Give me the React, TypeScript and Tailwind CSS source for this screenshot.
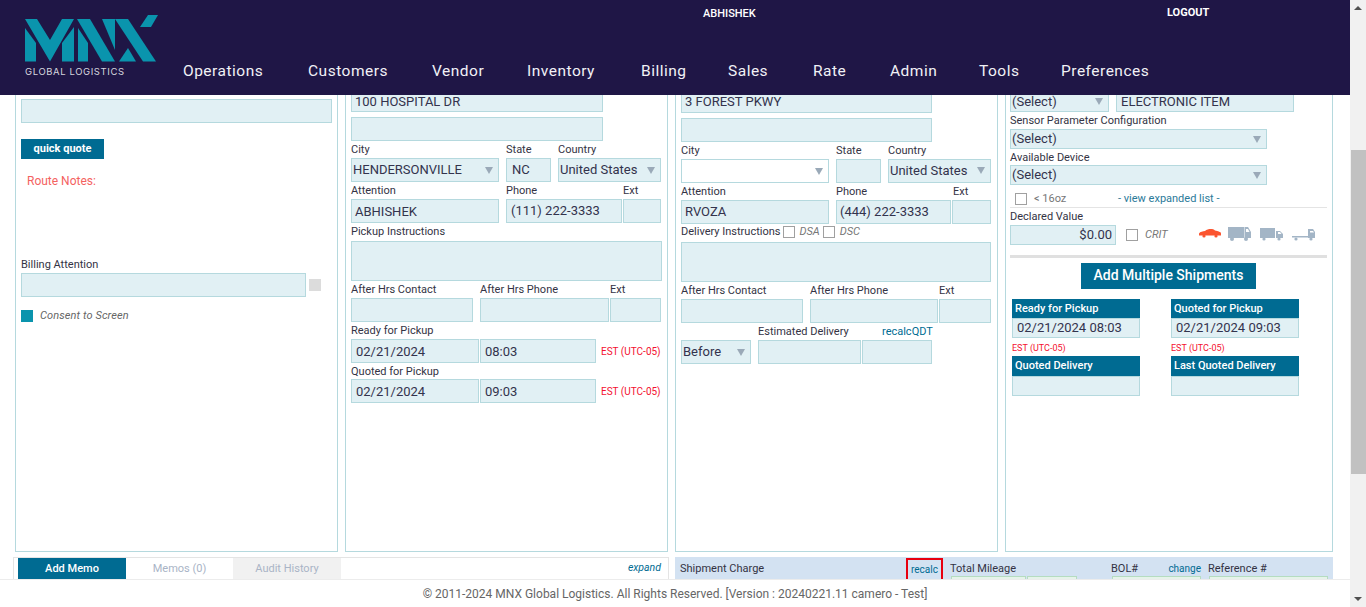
import type { ReactNode } from 'react'

const NAV = [
    { label: 'Operations', width: 'w-[81px]' },
    { label: 'Customers', width: 'w-[80px]' },
    { label: 'Vendor', width: 'w-[51px]' },
    { label: 'Inventory', width: 'w-[70px]' },
    { label: 'Billing', width: 'w-[43px]' },
    { label: 'Sales', width: 'w-[41px]' },
    { label: 'Rate', width: 'w-[33px]' },
    { label: 'Admin', width: 'w-[45px]' },
    { label: 'Tools', width: 'w-[38px]' },
    { label: 'Preferences', width: 'w-[90px]' },
]

function Logo() {
    return (
        <div className="w-[183px] shrink-0 pl-[25px] pt-[15px]">
            <svg width="134" height="47" viewBox="25 15 134 47" className="block fill-[#0a94ad]">
                <polygon points="25,28 36,43 36,61.5 25,61.5" />
                <polygon points="25,19 37,19 50,40 62,19 74,19 50,61.5" />
                <polygon points="62,43 74,27 74,61.5 62,61.5" />
                <polygon points="78,28 88,43 88,61.5 78,61.5" />
                <polygon points="77,19 90,19 115,61.5 102,61.5" />
                <polygon points="102,19 115,19 115,50" />
                <polygon points="115,19 128,19 156,61.5 143,61.5" />
                <polygon points="119,61.5 128,48 136,61.5" />
                <polygon points="140,27 148,15 158,15 151,27" />
            </svg>
            <div className="mt-[3px] font-['Inter',sans-serif] text-[9.5px] leading-[14px] tracking-[0.6px] text-[#d5d5de]">GLOBAL LOGISTICS</div>
        </div>
    )
}

function Header() {
    return (
        <header className="flex h-[95px] shrink-0 bg-[#1f1646] text-white">
            <Logo />
            <div className="flex flex-1 flex-col justify-between pb-[13px] pt-[6px]">
                <div className="flex text-[11px] leading-[14px]">
                    <span className="ml-[520px] w-[464px] pt-px font-medium">ABHISHEK</span>
                    <span className="font-bold">LOGOUT</span>
                </div>
                <nav className="flex gap-[44px] text-[15.5px] leading-[22px] tracking-[0.5px] text-[#f1f1f6]">
                    {NAV.map(n => (
                        <span key={n.label} className={`whitespace-nowrap ${n.width}`}>
                            {n.label}
                        </span>
                    ))}
                </nav>
            </div>
        </header>
    )
}

function Field({ className = '', children }: { className?: string; children?: ReactNode }) {
    return (
        <div className={`flex shrink-0 items-center overflow-hidden whitespace-nowrap border border-[#b5d9de] bg-[#e1f0f4] px-[3px] text-[13px] leading-[14px] text-[#33334d] ${className}`}>
            {children}
        </div>
    )
}

function Select({ className = '', children }: { className?: string; children?: ReactNode }) {
    return (
        <Field className={`justify-between pl-[1px] pr-[5px] ${className}`}>
            <span>{children}</span>
            <span className="h-0 w-0 border-x-[4px] border-t-[7px] border-x-transparent border-t-[#9aa9b8]" />
        </Field>
    )
}

function Label({ className = '', children }: { className?: string; children?: ReactNode }) {
    return <span className={`shrink-0 whitespace-nowrap text-[11px] text-[#333344] ${className}`}>{children}</span>
}

function LabelRow({ className = 'h-[17px]', children }: { className?: string; children?: ReactNode }) {
    return <div className={`flex shrink-0 items-center pt-[2px] ${className}`}>{children}</div>
}

function Check({ className = '' }: { className?: string }) {
    return <span className={`inline-block h-[12px] w-[12px] shrink-0 border border-[#a0a0a0] bg-white ${className}`} />
}

function Est({ className = '' }: { className?: string }) {
    return <span className={`whitespace-nowrap leading-[12px] text-[#f4102f] ${className}`}>EST (UTC-05)</span>
}

function BillingColumn() {
    return (
        <section className="flex w-[323px] shrink-0 flex-col border-x border-b border-[#b5d9de] px-[5px]">
            <Field className="mt-[4px] h-[24px] w-[311px]" />
            <button className="mt-[16px] h-[20px] w-[83px] bg-[#006b92] text-[11px] font-bold text-white">quick quote</button>
            <div className="ml-[6px] mt-[15px] text-[12px] leading-[14px] text-[#f4625f]">Route Notes:</div>
            <LabelRow className="mt-[69px] h-[14px]">
                <Label>Billing Attention</Label>
            </LabelRow>
            <div className="mt-[2px] flex items-center gap-[3px]">
                <Field className="h-[24px] w-[285px]" />
                <span className="h-[12px] w-[12px] bg-[#dcdcdc]" />
            </div>
            <div className="mt-[13px] flex items-center gap-[7px]">
                <span className="h-[12px] w-[12px] bg-[#0a94ad]" />
                <span className="text-[11px] italic leading-[12px] tracking-[0.1px] text-[#666666]">Consent to Screen</span>
            </div>
        </section>
    )
}

function PickupColumn() {
    return (
        <section className="flex w-[323px] shrink-0 flex-col border-x border-b border-[#b5d9de] px-[5px]">
            <Field className="-mt-[5px] h-[22px] w-[252px] pt-[2px]">100 HOSPITAL DR</Field>
            <Field className="mt-[5px] h-[24px] w-[252px]" />
            <LabelRow>
                <Label className="w-[155px]">City</Label>
                <Label className="w-[52px]">State</Label>
                <Label>Country</Label>
            </LabelRow>
            <div className="flex h-[24px]">
                <Select className="w-[148px]">HENDERSONVILLE</Select>
                <Field className="ml-[7px] w-[45px] justify-start pl-[5px]">NC</Field>
                <Select className="ml-[7px] w-[103px]">United States</Select>
            </div>
            <LabelRow>
                <Label className="w-[155px]">Attention</Label>
                <Label className="w-[117px]">Phone</Label>
                <Label>Ext</Label>
            </LabelRow>
            <div className="flex h-[24px]">
                <Field className="w-[148px] pt-px">ABHISHEK</Field>
                <Field className="ml-[7px] w-[116px] pl-[4px]">(111) 222-3333</Field>
                <Field className="ml-[1px] w-[38px]" />
            </div>
            <LabelRow className="h-[18px] pb-[2px]">
                <Label>Pickup Instructions</Label>
            </LabelRow>
            <Field className="h-[40px] w-[311px]" />
            <LabelRow>
                <Label className="w-[129px]">After Hrs Contact</Label>
                <Label className="w-[130px]">After Hrs Phone</Label>
                <Label>Ext</Label>
            </LabelRow>
            <div className="flex h-[24px]">
                <Field className="w-[122px]" />
                <Field className="ml-[7px] w-[129px]" />
                <Field className="ml-[1px] w-[51px]" />
            </div>
            <LabelRow>
                <Label>Ready for Pickup</Label>
            </LabelRow>
            <div className="flex h-[24px] items-center">
                <Field className="h-full w-[128px] pl-[4px] pt-px">02/21/2024</Field>
                <Field className="ml-[1px] h-full w-[116px] pl-[4px] pt-px">08:03</Field>
                <Est className="ml-[5px] mt-px text-[10px]" />
            </div>
            <LabelRow className="h-[16px]">
                <Label>Quoted for Pickup</Label>
            </LabelRow>
            <div className="flex h-[24px] items-center">
                <Field className="h-full w-[128px] pl-[4px] pt-px">02/21/2024</Field>
                <Field className="ml-[1px] h-full w-[116px] pl-[4px] pt-px">09:03</Field>
                <Est className="ml-[5px] mt-px text-[10px]" />
            </div>
        </section>
    )
}

function DeliveryColumn() {
    return (
        <section className="flex w-[323px] shrink-0 flex-col border-x border-b border-[#b5d9de] px-[5px]">
            <Field className="-mt-[4px] h-[22px] w-[251px]">3 FOREST PKWY</Field>
            <Field className="mt-[5px] h-[24px] w-[251px]" />
            <LabelRow>
                <Label className="w-[155px]">City</Label>
                <Label className="w-[52px]">State</Label>
                <Label>Country</Label>
            </LabelRow>
            <div className="flex h-[24px]">
                <Select className="w-[148px] bg-white" />
                <Field className="ml-[7px] w-[45px]" />
                <Select className="ml-[7px] w-[103px] pb-px">United States</Select>
            </div>
            <LabelRow>
                <Label className="w-[155px]">Attention</Label>
                <Label className="w-[117px]">Phone</Label>
                <Label>Ext</Label>
            </LabelRow>
            <div className="flex h-[24px]">
                <Field className="w-[148px]">RVOZA</Field>
                <Field className="ml-[7px] w-[115px]">(444) 222-3333</Field>
                <Field className="ml-[1px] w-[39px]" />
            </div>
            <div className="flex h-[18px] shrink-0 items-center pb-[2px]">
                <Label>Delivery Instructions</Label>
                <Check className="ml-[3px]" />
                <span className="ml-[4px] text-[11px] italic text-[#777777]">DSA</span>
                <Check className="ml-[3px]" />
                <span className="ml-[5px] text-[11px] italic text-[#777777]">DSC</span>
            </div>
            <Field className="h-[40px] w-[310px]" />
            <LabelRow>
                <Label className="w-[129px]">After Hrs Contact</Label>
                <Label className="w-[129px]">After Hrs Phone</Label>
                <Label>Ext</Label>
            </LabelRow>
            <div className="flex h-[24px]">
                <Field className="w-[122px]" />
                <Field className="ml-[7px] w-[128px]" />
                <Field className="ml-[1px] w-[52px]" />
            </div>
            <LabelRow>
                <Label className="ml-[77px] w-[124px]">Estimated Delivery</Label>
                <span className="text-[11px] text-[#006b92]">recalcQDT</span>
            </LabelRow>
            <div className="flex h-[24px]">
                <Select className="w-[70px]">Before</Select>
                <Field className="ml-[7px] w-[103px]" />
                <Field className="ml-[1px] w-[70px]" />
            </div>
        </section>
    )
}

function Vehicles() {
    return (
        <svg width="118" height="16" viewBox="0 0 118 16" className="ml-[53px] block">
            <g fill="#fb5530" transform="translate(0 -2.5)">
                <path d="M0 9 C1 7 4 7 6 6.5 C9 4 14 4 16 6 C19 7 22 7 22 9 L22 11 L0 11 Z" />
                <circle cx="5" cy="11.5" r="1.6" />
                <circle cx="17" cy="11.5" r="1.6" />
            </g>
            <g fill="#a3b5c6" transform="translate(0 -1)">
                <path d="M29 1 H45 V12 H29 Z" />
                <path d="M45.5 1 H49 L52 6 V12 H45.5 Z" />
                <circle cx="33" cy="13" r="2" />
                <circle cx="47" cy="13" r="2" />
                <path d="M61 2 H76 V12 H61 Z" />
                <path d="M77 5 H81 L84 8 V12 H77 Z" />
                <circle cx="65" cy="13" r="1.6" />
                <circle cx="80" cy="13" r="1.6" />
                <path d="M93 10 H109 V11.5 H93 Z" />
                <path d="M109 3 H114 L116 6 V12 H109 Z" />
                <circle cx="97" cy="13" r="1.6" />
                <circle cx="112" cy="13" r="1.6" />
            </g>
            <g fill="#ffffff" transform="translate(0 -1)">
                <path d="M47 3 H49 L50.5 6 H47 Z" />
                <path d="M79 6 H81 L82.5 8 H79 Z" />
                <path d="M111 5 H114 L115 6.5 H111 Z" />
            </g>
        </svg>
    )
}

function TimeCard({ title, value, headClass }: { title: string; value?: string; headClass: string }) {
    return (
        <div className="w-[128px]">
            <div className={`flex items-center bg-[#006b92] px-[3px] pt-px text-[11px] font-medium text-white ${headClass}`}>{title}</div>
            <Field className="h-[20px] w-full pl-[4px]">{value}</Field>
        </div>
    )
}

function ServiceColumn() {
    return (
        <section className="flex w-[328px] shrink-0 flex-col border-x border-b border-[#b5d9de] pl-[4px]">
            <div className="-mt-[5px] flex h-[22px]">
                <Select className="w-[99px] pt-px">(Select)</Select>
                <Field className="ml-[7px] w-[178px] pl-[4px] pt-px">ELECTRONIC ITEM</Field>
            </div>
            <LabelRow>
                <Label>Sensor Parameter Configuration</Label>
            </LabelRow>
            <Select className="h-[20px] w-[257px]">(Select)</Select>
            <LabelRow className="h-[16px]">
                <Label>Available Device</Label>
            </LabelRow>
            <Select className="h-[20px] w-[257px]">(Select)</Select>
            <div className="mt-[7px] flex h-[14px] items-center pl-[5px] text-[11px]">
                <Check />
                <span className="ml-[7px] w-[84px] text-[#777777]">&lt; 16oz</span>
                <span className="text-[#2b7a99]">- view expanded list -</span>
            </div>
            <div className="mt-[1px] h-px w-[317px] bg-[#e4e4e4]" />
            <LabelRow className="h-[17px]">
                <Label>Declared Value</Label>
            </LabelRow>
            <div className="flex h-[20px] items-center">
                <Field className="h-full w-[106px] justify-end">$0.00</Field>
                <Check className="ml-[10px]" />
                <span className="ml-[7px] w-[1px] whitespace-nowrap text-[11px] italic text-[#777777]">CRIT</span>
                <Vehicles />
            </div>
            <div className="mt-[10px] h-[3px] w-[317px] bg-[#e0e0e0]" />
            <button className="ml-[71px] mt-[5px] h-[26px] w-[175px] shrink-0 bg-[#006b92] pb-px text-[14px] font-medium text-white">Add Multiple Shipments</button>
            <div className="ml-[2px] mt-[10px] flex gap-[31px]">
                <div className="w-[128px]">
                    <TimeCard title="Ready for Pickup" value="02/21/2024 08:03" headClass="h-[19px]" />
                    <Est className="mt-[4px] block text-[9px]" />
                    <div className="mt-[2px]">
                        <TimeCard title="Quoted Delivery" headClass="h-[20px]" />
                    </div>
                </div>
                <div className="w-[128px]">
                    <TimeCard title="Quoted for Pickup" value="02/21/2024 09:03" headClass="h-[19px]" />
                    <Est className="mt-[4px] block text-[9px]" />
                    <div className="mt-[2px]">
                        <TimeCard title="Last Quoted Delivery" headClass="h-[20px]" />
                    </div>
                </div>
            </div>
        </section>
    )
}

function MemoBar() {
    return (
        <div className="ml-[13px] flex h-[22px] w-[656px] items-start border-x border-t border-[#e4e4e4] pl-[4px] text-[11px] font-medium">
            <span className="flex h-[21px] w-[108px] items-center justify-center bg-[#006b92] pt-px text-white">Add Memo</span>
            <span className="flex h-[21px] w-[107px] items-center justify-center pt-px font-normal text-[#a9b4c6]">Memos (0)</span>
            <span className="flex h-[21px] w-[108px] items-center justify-center bg-[#f1f1f1] pt-px font-normal text-[#a9b4c6]">Audit History</span>
            <span className="ml-auto mr-[7px] mt-[3px] text-[10.5px] font-normal italic leading-[14px] text-[#006b92]">expand</span>
        </div>
    )
}

function ChargeBar() {
    return (
        <div className="ml-[6px] flex h-[22px] w-[658px] overflow-hidden bg-[#d3e2f2] text-[11px] text-[#333344]">
            <span className="mt-[5px] w-[231px] shrink-0 pl-[5px] leading-[14px]">Shipment Charge</span>
            <span className="mt-px flex h-[30px] w-[37px] shrink-0 justify-center border-2 border-[#e8000f] pt-[3px] text-[10px] leading-[14px] text-[#006b92]">recalc</span>
            <div className="ml-[7px] w-[161px] shrink-0">
                <div className="mt-[5px] leading-[14px]">Total Mileage</div>
                <div className="ml-px flex gap-px">
                    <span className="h-[8px] w-[75px] border border-[#b5dcc0] bg-[#e6f3ea]" />
                    <span className="h-[8px] w-[50px] border border-[#b5dcc0] bg-[#e6f3ea]" />
                </div>
            </div>
            <div className="w-[97px] shrink-0">
                <div className="mt-[5px] flex justify-between leading-[14px]">
                    <span>BOL#</span>
                    <span className="mr-[7px] text-[10px] text-[#006b92]">change</span>
                </div>
                <span className="ml-px block h-[8px] w-[89px] border border-[#b5dcc0] bg-[#e6f3ea]" />
            </div>
            <div className="flex-1">
                <div className="mt-[5px] leading-[14px]">Reference #</div>
                <span className="ml-px block h-[8px] w-[119px] border border-[#b5dcc0] bg-[#e6f3ea]" />
            </div>
        </div>
    )
}

function Scrollbar() {
    return (
        <div className="flex w-[16px] shrink-0 flex-col items-center bg-[#f1f1f1]">
            <span className="mt-[6px] h-0 w-0 border-x-[4px] border-b-[4px] border-x-transparent border-b-[#505050]" />
            <div className="ml-px mt-[140px] h-[324px] w-[15px] bg-[#c1c1c1]" />
            <span className="mb-[6px] mt-auto h-0 w-0 border-x-[4px] border-t-[4px] border-x-transparent border-t-[#505050]" />
        </div>
    )
}

export default function App() {
    return (
        <div className="flex h-[607px] w-[1366px] overflow-hidden bg-white font-['Roboto',sans-serif]">
            <div className="flex w-[1350px] shrink-0 flex-col">
                <Header />
                <main className="flex min-h-0 flex-1 flex-col overflow-hidden">
                    <div className="ml-[15px] flex h-[457px] shrink-0 gap-[7px]">
                        <BillingColumn />
                        <PickupColumn />
                        <DeliveryColumn />
                        <ServiceColumn />
                    </div>
                    <div className="mt-[5px] flex">
                        <MemoBar />
                        <ChargeBar />
                    </div>
                </main>
                <footer className="flex h-[28px] shrink-0 items-center justify-center border-t border-[#ececec] bg-white text-[12px] text-[#666666]">
                    © 2011-2024 MNX Global Logistics. All Rights Reserved. [Version : 20240221.11 camero - Test]
                </footer>
            </div>
            <Scrollbar />
        </div>
    )
}
